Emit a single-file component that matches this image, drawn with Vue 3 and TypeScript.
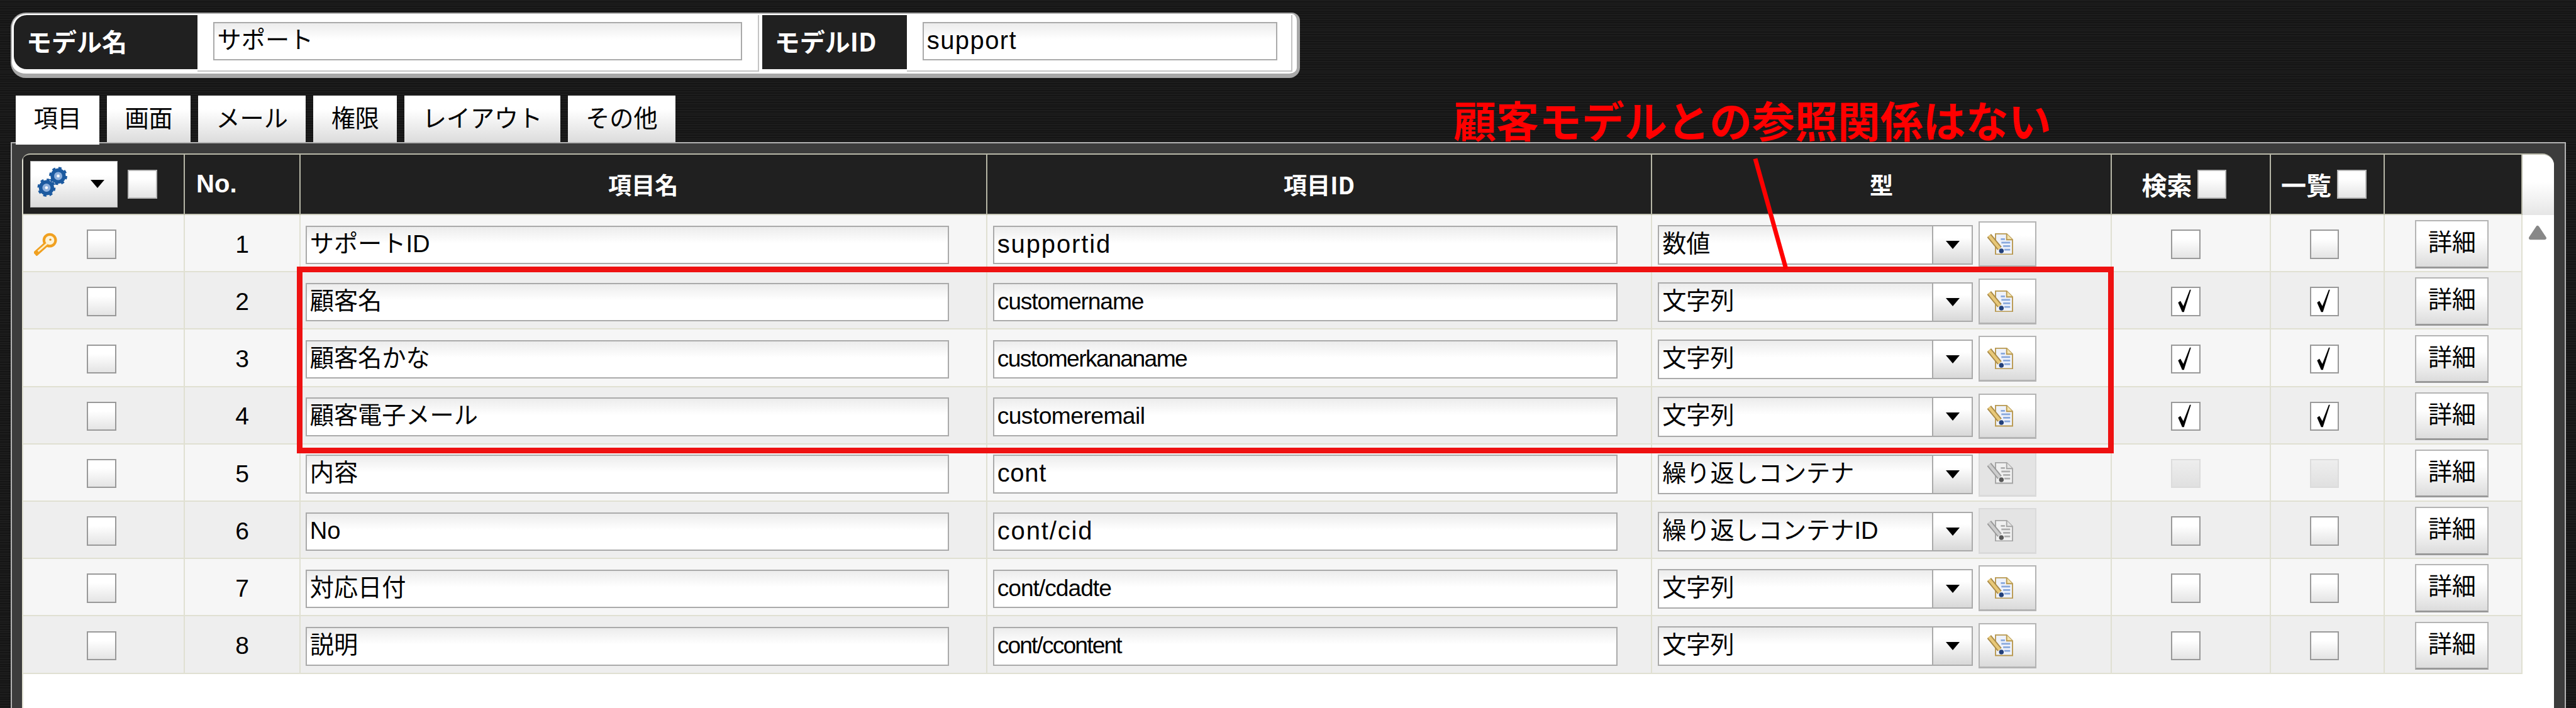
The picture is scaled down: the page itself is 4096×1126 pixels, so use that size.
<script setup lang="ts">
interface Row {
  no: number
  name: string
  id: string
  idSize: number
  idSpacing: number
  type: string
  key?: boolean
  checked?: boolean
  lockedFlags?: boolean
  iconOff?: boolean
}

const tabs: string[] = ['項目', '画面', 'メール', '権限', 'レイアウト', 'その他']

const rows: Row[] = [
  { no: 1, name: 'サポートID', id: 'supportid', idSize: 43, idSpacing: 2, type: '数値', key: true },
  { no: 2, name: '顧客名', id: 'customername', idSize: 40, idSpacing: -1.2, type: '文字列', checked: true },
  { no: 3, name: '顧客名かな', id: 'customerkananame', idSize: 40, idSpacing: -1.7, type: '文字列', checked: true },
  { no: 4, name: '顧客電子メール', id: 'customeremail', idSize: 40, idSpacing: -0.6, type: '文字列', checked: true },
  { no: 5, name: '内容', id: 'cont', idSize: 43, idSpacing: 0.7, type: '繰り返しコンテナ', lockedFlags: true, iconOff: true },
  { no: 6, name: 'No', id: 'cont/cid', idSize: 43, idSpacing: 2, type: '繰り返しコンテナID', iconOff: true },
  { no: 7, name: '対応日付', id: 'cont/cdadte', idSize: 40, idSpacing: -1.1, type: '文字列' },
  { no: 8, name: '説明', id: 'cont/ccontent', idSize: 40, idSpacing: -2, type: '文字列' }
]
</script>

<template>
  <div class="page">
    <div class="model-bar">
      <div class="bar-label first">モデル名</div>
      <div class="bar-field name-field"><div class="input bar-input name-input">サポート</div></div>
      <div class="bar-label second">モデルID</div>
      <div class="bar-field id-field"><div class="input bar-input id-input">support</div></div>
    </div>

    <div class="tabs">
      <div v-for="(t, i) in tabs" :key="t" class="tab" :class="{ active: i === 0 }">{{ t }}</div>
    </div>

    <div class="panel">
      <div class="inner">
        <div class="table">
          <div class="grid head">
            <div class="cell first-head">
              <div class="gear-btn">
                <svg class="gears" width="52" height="52" viewBox="0 0 52 52">
                  <g fill="#8fb0dc" stroke="#1c5aa0">
                    <circle cx="16" cy="36" r="10" stroke-width="6" />
                    <circle cx="16" cy="36" r="13.5" fill="none" stroke-width="4" stroke-dasharray="5.3 5.3" />
                    <circle cx="36" cy="16" r="10" stroke-width="6" />
                    <circle cx="36" cy="16" r="13.5" fill="none" stroke-width="4" stroke-dasharray="5.3 5.3" />
                  </g>
                  <circle cx="16" cy="36" r="2.5" fill="#fff" />
                  <circle cx="36" cy="16" r="2.5" fill="#fff" />
                </svg>
                <span class="tri gear-tri"></span>
              </div>
              <span class="check"></span>
            </div>
            <div class="cell no-head">No.</div>
            <div class="cell center">項目名</div>
            <div class="cell center">項目ID</div>
            <div class="cell center">型</div>
            <div class="cell flag-head search-head">検索<span class="check"></span></div>
            <div class="cell flag-head list-head">一覧<span class="check"></span></div>
            <div class="cell last-head"></div>
          </div>

          <div v-for="r in rows" :key="r.no" class="grid row" :class="{ even: r.no % 2 === 0 }">
            <div class="cell select-cell">
              <span class="key-slot">
                <svg v-if="r.key" width="40" height="40" viewBox="0 0 40 40">
                  <path d="M24 17 L5 34" stroke="#f0a020" stroke-width="9" stroke-linecap="square" fill="none" />
                  <circle cx="27" cy="13" r="10" fill="#fdf3d8" stroke="#f0a020" stroke-width="4.5" />
                  <path d="M23 18 L7 32" stroke="#fdeec8" stroke-width="3" fill="none" />
                  <circle cx="28" cy="12" r="1.8" fill="#e09018" />
                </svg>
              </span>
              <span class="check"></span>
            </div>
            <div class="cell num">{{ r.no }}</div>
            <div class="cell name-cell"><div class="input">{{ r.name }}</div></div>
            <div class="cell id-cell">
              <div class="input" :style="{ fontSize: r.idSize + 'px', letterSpacing: r.idSpacing + 'px' }">{{ r.id }}</div>
            </div>
            <div class="cell type-cell">
              <div class="select">
                <span class="select-text">{{ r.type }}</span>
                <span class="select-arrow"><span class="tri"></span></span>
              </div>
              <div class="icon-btn" :class="{ off: r.iconOff }">
                <svg width="44" height="37" viewBox="0 0 44 37">
                  <path d="M14 1 H33 L43 11 V36 H14 Z" fill="#eef2fb" stroke="#b8984e" stroke-width="2" />
                  <path d="M33 1 V11 H43" fill="#f4e4b0" stroke="#b8984e" stroke-width="2" />
                  <path d="M23 10 H30 M24 16 H39 M27 22 H39 M29 28 H39" stroke="#88a8dc" stroke-width="3" fill="none" />
                  <path d="M3 4 L21 26" stroke="#a98a48" stroke-width="9" fill="none" />
                  <path d="M3 4 L21 26" stroke="#e8c878" stroke-width="5" fill="none" />
                  <circle cx="24" cy="30" r="4" fill="#22407a" />
                </svg>
              </div>
            </div>
            <div class="cell search-cell">
              <span class="check" :class="{ disabled: r.lockedFlags, on: r.checked }">
                <svg v-if="r.checked" width="44" height="44" viewBox="0 0 44 44">
                  <path d="M10 25 L14 22 L19 31 L30 3 L32 3 L20 41 L17 41 Z" fill="#000" />
                </svg>
              </span>
            </div>
            <div class="cell list-cell">
              <span class="check" :class="{ disabled: r.lockedFlags, on: r.checked }">
                <svg v-if="r.checked" width="44" height="44" viewBox="0 0 44 44">
                  <path d="M10 25 L14 22 L19 31 L30 3 L32 3 L20 41 L17 41 Z" fill="#000" />
                </svg>
              </span>
            </div>
            <div class="cell detail-cell"><div class="detail">詳細</div></div>
          </div>
        </div>
        <div class="scroll">
          <div class="scroll-head"></div>
          <svg class="scroll-up" width="32" height="26" viewBox="0 0 32 26">
            <path d="M16 4 L28 22 H4 Z" fill="#888" stroke="#888" stroke-width="6" stroke-linejoin="round" />
          </svg>
        </div>
      </div>
    </div>

    <div class="note">顧客モデルとの参照関係はない</div>
    <div class="note-box"></div>
    <div class="note-line"></div>
  </div>
</template>

<style>
html,
body {
  margin: 0;
  background: #161616;
}
</style>

<style scoped>
.page {
  zoom: 0.9309;
  position: relative;
  width: 4400px;
  height: 1210px;
  overflow: hidden;
  box-sizing: border-box;
  padding-top: 21px;
  background: repeating-linear-gradient(#1d1d1d 0 2px, #151515 2px 4px);
  font-family: "Liberation Sans", "Noto Sans CJK JP", sans-serif;
  font-size: 41px;
  color: #000;
}

/* model bar */
.model-bar {
  display: flex;
  box-sizing: border-box;
  width: 2202px;
  height: 112px;
  margin-left: 18px;
  padding: 3px 6px 0 4px;
  background: #fff;
  border: 3px solid #a8a8a8;
  border-width: 3px 6px 8px 3px;
  border-radius: 26px 14px 18px 26px;
}
.bar-label {
  height: 92px;
  margin-top: 0;
  background: #202020;
  color: #fff;
  font-weight: 700;
  font-size: 43px;
  line-height: 90px;
  padding-left: 21px;
  box-sizing: border-box;
  font-family: "Noto Sans CJK JP", sans-serif;
}
.bar-label.first {
  width: 313px;
  border-radius: 22px 0 0 22px;
}
.bar-label.second {
  width: 247px;
  margin-left: 5px;
}
.bar-field {
  box-sizing: border-box;
  height: 96px;
  padding: 11px 0 0 27px;
  border-right: 3px solid #c4c4c4;
  border-bottom: 3px solid #c4c4c4;
}
.name-field {
  width: 960px;
}
.id-field {
  width: 658px;
}
.bar-input {
  height: 65px;
  line-height: 60px;
}
.name-input {
  width: 904px;
}
.id-input {
  width: 606px;
  font-size: 43px;
  letter-spacing: 1.5px;
}

/* shared fields */
.input,
.select {
  box-sizing: border-box;
  height: 66px;
  border: 3px solid #aaa;
  background: linear-gradient(#ececec, #fff 45%);
  line-height: 58px;
  padding-left: 5px;
  white-space: nowrap;
  overflow: hidden;
}

/* tabs */
.tabs {
  display: flex;
  gap: 13px;
  margin: 30px 0 0 27px;
  height: 80px;
  position: relative;
  z-index: 1;
}
.tab {
  padding: 0 30.4px;
  height: 80px;
  line-height: 80px;
  background: linear-gradient(#fff 30%, #dcdcdc);
}
.tab.active {
  height: 84px;
  background: #fff;
}

/* panel */
.panel {
  box-sizing: border-box;
  width: 4365px;
  height: 967px;
  margin-left: 18px;
  padding: 17px 18px 0 17px;
  background: #3c3c3c;
  border: 3px solid #b4b4b4;
  border-bottom: 0;
}
.inner {
  display: flex;
  height: 100%;
  background: #fff;
  border-radius: 14px 20px 0 0;
  overflow: hidden;
  box-sizing: border-box;
  border-top: 3px solid #b8b8a8;
}
.table {
  box-sizing: border-box;
  width: 4272px;
  border-left: 3px solid #e0e0d2;
}
.grid {
  display: grid;
  grid-template-columns: 277px 197px 1173px 1136px 785px 272px 194px 235px;
}
.cell {
  box-sizing: border-box;
  display: flex;
  align-items: center;
  border-right: 3px solid #e0e0d2;
  border-bottom: 3px solid #e0e0d2;
}

/* header */
.head {
  height: 103px;
}
.head .cell {
  background: #202020;
  color: #fff;
  font-weight: 700;
  font-size: 40px;
  border-right-color: #b6b6a6;
  border-bottom-color: #c8c8b8;
  font-family: "Noto Sans CJK JP", sans-serif;
}
.center {
  justify-content: center;
}
.first-head {
  padding-left: 12px;
  gap: 17px;
}
.gear-btn {
  position: relative;
  box-sizing: border-box;
  width: 150px;
  height: 80px;
  background: linear-gradient(#fff 30%, #dadada);
  border: 2px solid #bbb;
}
.gears {
  position: absolute;
  left: 11px;
  top: 9px;
}
.gear-tri {
  position: absolute;
  left: 102px;
  top: 31px;
}
.tri {
  display: block;
  width: 0;
  height: 0;
  border-left: 12px solid transparent;
  border-right: 12px solid transparent;
  border-top: 15px solid #000;
}
.head .no-head {
  padding-left: 19px;
  font-size: 43px;
  font-family: "Liberation Sans", sans-serif;
}
.head .flag-head {
  font-size: 43px;
}
.search-head {
  padding-left: 51px;
  gap: 9px;
}
.list-head {
  padding-left: 17px;
  gap: 10px;
}
.head .check {
  border-color: #b8b8b8;
}

/* rows */
.row {
  height: 98px;
  background: #f6f6f6;
}
.row.even {
  background: #eeeeee;
}
.row .cell {
  padding-top: 4px;
}
.row .select-cell {
  padding-left: 19px;
}
.key-slot {
  display: block;
  width: 40px;
  height: 40px;
  margin-right: 50px;
}
.check {
  position: relative;
  display: block;
  flex: none;
  box-sizing: border-box;
  width: 50px;
  height: 50px;
  border: 3px solid #999;
  background: linear-gradient(#fff 30%, #e4e4e4);
}
.check.on {
  background: #fff;
}
.check.disabled {
  border-color: #dcdcdc;
  background: linear-gradient(#eeeeee, #e0e0e0);
}
.check svg {
  display: block;
}
.num {
  justify-content: center;
  font-size: 42px;
  line-height: 1;
}
.row .name-cell {
  padding-left: 9px;
}
.row .id-cell {
  padding-left: 10px;
}
.input {
  margin-top: 2px;
}
.bar-input {
  margin-top: 0;
}
.name-cell .input {
  width: 1099px;
}
.id-cell .input {
  width: 1067px;
}
.row .type-cell {
  padding-left: 9px;
  gap: 9px;
}
.select {
  display: flex;
  margin-top: 2px;
  width: 539px;
  height: 68px;
  padding-left: 0;
}
.select-text {
  flex: 1;
  padding-left: 6px;
  line-height: 60px;
}
.select-arrow {
  box-sizing: border-box;
  display: flex;
  align-items: center;
  justify-content: center;
  width: 68px;
  border-left: 3px solid #aaa;
  background: linear-gradient(#fff 30%, #d8d8d8);
}
.icon-btn {
  box-sizing: border-box;
  display: flex;
  align-items: center;
  padding-left: 13px;
  width: 99px;
  height: 78px;
  border: 3px solid #b4b4b4;
  border-bottom-width: 4px;
  background: linear-gradient(#fff 30%, #dadada);
}
.icon-btn.off {
  background: #e4e4e4;
  border-color: #dadada;
}
.icon-btn.off svg {
  filter: grayscale(1) opacity(0.85);
}
.row .search-cell {
  padding-left: 101px;
}
.row .list-cell {
  padding-left: 66px;
}
.row .detail-cell {
  padding-left: 52px;
}
.detail {
  box-sizing: border-box;
  width: 126px;
  height: 82px;
  border: 3px solid #b4b4b4;
  border-bottom: 4px solid #999;
  background: linear-gradient(#fff 35%, #dcdcdc);
  text-align: center;
  line-height: 72px;
}

/* scrollbar */
.scroll {
  position: relative;
  flex: 1;
}
.scroll-head {
  height: 103px;
  background: linear-gradient(#fff 45%, #e6e6e6);
}
.scroll-up {
  position: absolute;
  left: 9px;
  top: 120px;
}

/* red annotation, drawn over the screen */
.note {
  position: absolute;
  left: 2483px;
  top: 160px;
  color: #ff0000;
  font-family: "Noto Sans CJK JP", sans-serif;
  font-weight: 700;
  font-size: 73px;
  line-height: 87px;
  white-space: nowrap;
}
.note-box {
  position: absolute;
  left: 507px;
  top: 455px;
  width: 3104px;
  height: 319px;
  box-sizing: border-box;
  border: 10px solid #ee1111;
}
.note-line {
  position: absolute;
  left: 3021px;
  top: 268px;
  width: 8px;
  height: 196px;
  background: #ff0000;
  transform: rotate(-15.6deg);
}
</style>
